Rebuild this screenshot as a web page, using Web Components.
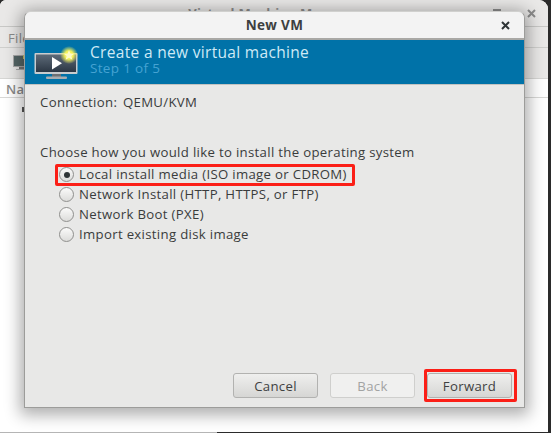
<!DOCTYPE html>
<html lang="en">
  <head>
    <meta charset="UTF-8" />
    <title>New VM</title>
    <style>
      html, body { margin: 0; height: 100%; background: #fff; overflow: hidden; }
    </style>
  </head>
  <body>
    <vm-desktop>
      <vm-dialog heading="New VM">
        <vm-radio checked mark>Local install media (ISO image or CDROM)</vm-radio>
        <vm-radio>Network Install (HTTP, HTTPS, or FTP)</vm-radio>
        <vm-radio>Network Boot (PXE)</vm-radio>
        <vm-radio>Import existing disk image</vm-radio>
        <vm-button slot="actions">Cancel</vm-button>
        <vm-button slot="actions" disabled>Back</vm-button>
        <vm-button slot="actions" mark>Forward</vm-button>
      </vm-dialog>
    </vm-desktop>

    <script>
      customElements.define(
        "vm-desktop",
        class extends HTMLElement {
          constructor() {
            super();
            this.attachShadow({ mode: "open" }).innerHTML = `
              <style>
                :host { display: block; position: relative; width: 551px; height: 433px; overflow: hidden;
                  font-family: "Open Sans", "Liberation Sans", sans-serif; color: #3a3c3c; background: #2b2b2b; letter-spacing: .32px; }
                .sill { position: absolute; left: 0; bottom: 0; width: 217px; height: 1px; background: #b5b5b5; }
                .parent { position: absolute; left: 0; top: 0; width: 548px; height: 432px; background: #fff;
                  border-radius: 6px 9px 0 0; overflow: hidden; }
                .bar { height: 26px; display: flex; align-items: center; justify-content: center; background: #e9e8e7;
                  border-bottom: 1px solid #c8c8c6; font-size: 13px; font-weight: 700; color: #8c8c8c; }
                .min { position: absolute; left: 493px; top: 9px; width: 8px; height: 2px; background: #8c8c8c; }
                .bar svg { position: absolute; left: 527px; top: 9px; }
                .menu { height: 20px; background: #e9e8e7; border-bottom: 1px solid #cfcfcd; padding-left: 8px;
                  font-size: 13px; line-height: 22px; color: #8a8a8a; }
                .tools { height: 31px; background: #e9e8e7; border-bottom: 1px solid #d6d6d4; padding: 7px 0 0 13px; box-sizing: border-box; }
                .tools svg { display: block; }
                .head { height: 18px; background: #fff; border-bottom: 1px solid #d8d8d6; padding-left: 6px;
                  font-size: 13px; font-weight: 600; line-height: 20px; color: #8a8a8a; }
                .row { padding: 9px 0 0 22px; }
                .row i { display: block; width: 2px; height: 5px; background: #555; }
              </style>
              <div class="sill"></div>
              <div class="parent">
                <div class="bar">
                  Virtual Machine Manager
                  <span class="min"></span>
                  <svg width="9" height="9" viewBox="0 0 9 9"><path d="M1 1l7 7M8 1L1 8" stroke="#8c8c8c" stroke-width="2" /></svg>
                </div>
                <div class="menu">File</div>
                <div class="tools">
                  <svg width="18" height="17" viewBox="0 0 18 17">
                    <rect x="0.5" y="0.5" width="15" height="11" fill="#566" stroke="#aaa" />
                    <rect x="10" y="0" width="5" height="4" fill="#c9c86a" />
                    <rect x="6" y="12" width="5" height="2" fill="#777" />
                    <rect x="3" y="14" width="11" height="1" fill="#aaa" />
                  </svg>
                </div>
                <div class="head">Name</div>
                <div class="row"><i></i></div>
              </div>
              <slot></slot>
            `;
          }
        }
      );

      customElements.define(
        "vm-dialog",
        class extends HTMLElement {
          constructor() {
            super();
            this.attachShadow({ mode: "open" }).innerHTML = `
              <style>
                :host { display: flex; flex-direction: column; position: absolute; left: 24px; top: 11px;
                  width: 501px; height: 397px; box-sizing: border-box; background: #e8e8e7;
                  border: 1px solid #9c9c9a; border-top-color: #d0d0ce; border-radius: 7px 7px 0 0;
                  box-shadow: 0 3px 16px 4px rgba(0,0,0,.32); overflow: hidden; }
                header { flex: none; height: 26px; display: flex; align-items: center; justify-content: center;
                  position: relative; background: #f3f3f3; border-bottom: 2px solid #a9a8a5;
                  font-size: 13.5px; font-weight: 700; color: #3d3f3f; }
                header svg { position: absolute; right: 14px; top: 9px; }
                .banner { flex: none; height: 45px; display: flex; gap: 10px; padding: 0 0 0 9px; box-sizing: border-box;
                  background: #0072a8; border-bottom: 1px solid #c3c3c1; }
                .banner svg { flex: none; margin-top: 3px; }
                .lines { padding-top: 3px; }
                h1 { margin: 0; font-size: 15.5px; font-weight: 400; line-height: 18px; color: #cfeaf6; white-space: nowrap; }
                .step { font-size: 13.5px; line-height: 15px; color: #45a3d3; }
                main { flex: 1; padding: 9px 0 0 15px; font-size: 13.2px; line-height: 17px; }
                .conn { word-spacing: 2px; }
                .ask { margin: 33px 0 0; }
                .opts { display: flex; flex-direction: column; gap: 3px; padding: 5px 0 0 19px; }
                footer { flex: none; display: flex; justify-content: flex-end; gap: 12px; padding: 0 12px 9px 0; }
              </style>
              <header>
                ${this.getAttribute("heading")}
                <svg width="9" height="9" viewBox="0 0 9 9"><path d="M1 1l7 7M8 1L1 8" stroke="#2e3436" stroke-width="2" /></svg>
              </header>
              <div class="banner">
                <svg width="46" height="38" viewBox="0 0 46 38">
                  <defs>
                    <linearGradient id="scr" x1="0" y1="0" x2="0" y2="1">
                      <stop offset="0" stop-color="#5d6a78" />
                      <stop offset="1" stop-color="#2c3744" />
                    </linearGradient>
                    <radialGradient id="glow">
                      <stop offset="0.45" stop-color="#f4f25a" />
                      <stop offset="1" stop-color="#f4f25a" stop-opacity="0" />
                    </radialGradient>
                  </defs>
                  <rect x="0.5" y="10" width="43" height="21" rx="1" fill="#c9ccce" />
                  <rect x="2" y="11.5" width="40" height="17.5" fill="url(#scr)" />
                  <path d="M18 14l10 6.3L18 26.5z" fill="#fff" />
                  <rect x="18" y="31" width="9" height="3" fill="#6c7074" />
                  <rect x="12" y="33.5" width="21" height="2.4" rx="1" fill="#a9adb0" />
                  <circle cx="35" cy="12" r="9" fill="url(#glow)" />
                  <path d="M35 7l1.5 3.4 3.7.3-2.8 2.4.9 3.6-3.3-1.9-3.3 1.9.9-3.6-2.8-2.4 3.7-.3z" fill="#fdfbc8" />
                </svg>
                <div class="lines">
                  <h1>Create a new virtual machine</h1>
                  <div class="step">Step 1 of 5</div>
                </div>
              </div>
              <main>
                <div class="conn">Connection: QEMU/KVM</div>
                <p class="ask">Choose how you would like to install the operating system</p>
                <div class="opts"><slot></slot></div>
              </main>
              <footer><slot name="actions"></slot></footer>
            `;
          }
        }
      );

      customElements.define(
        "vm-radio",
        class extends HTMLElement {
          constructor() {
            super();
            this.attachShadow({ mode: "open" }).innerHTML = `
              <style>
                :host { display: flex; align-items: center; gap: 5px; position: relative; height: 17px; white-space: nowrap; }
                .dot { flex: none; width: 15px; height: 15px; box-sizing: border-box; border: 1px solid #8f8f8d; border-radius: 50%;
                  background: linear-gradient(#fafafa, #dcdcda); display: flex; align-items: center; justify-content: center; }
                :host([checked]) .dot::after { content: ""; width: 6px; height: 6px; border-radius: 50%; background: #2e3436; }
                :host([mark])::after { content: ""; position: absolute; left: -4px; top: -2px; width: 300px; height: 22px;
                  box-sizing: border-box; border: 3px solid #fb1f17; border-radius: 2px; }
              </style>
              <span class="dot"></span><span><slot></slot></span>
            `;
          }
        }
      );

      customElements.define(
        "vm-button",
        class extends HTMLElement {
          constructor() {
            super();
            this.attachShadow({ mode: "open" }).innerHTML = `
              <style>
                :host { display: flex; align-items: center; justify-content: center; position: relative;
                  width: 85px; height: 25px; box-sizing: border-box; border: 1px solid #b2b2b0; border-radius: 3px;
                  background: linear-gradient(#efefee, #d6d6d4); font-size: 13.2px; color: #3f4141; }
                :host([disabled]) { background: #f0f0ef; border-color: #cfcfcd; color: #a2a3a3; }
                :host([mark])::after { content: ""; position: absolute; left: -4px; top: -5px; width: 93px; height: 33px;
                  box-sizing: border-box; border: 3px solid #fb1f17; border-radius: 2px; }
              </style>
              <slot></slot>
            `;
          }
        }
      );
    </script>
  </body>
</html>
